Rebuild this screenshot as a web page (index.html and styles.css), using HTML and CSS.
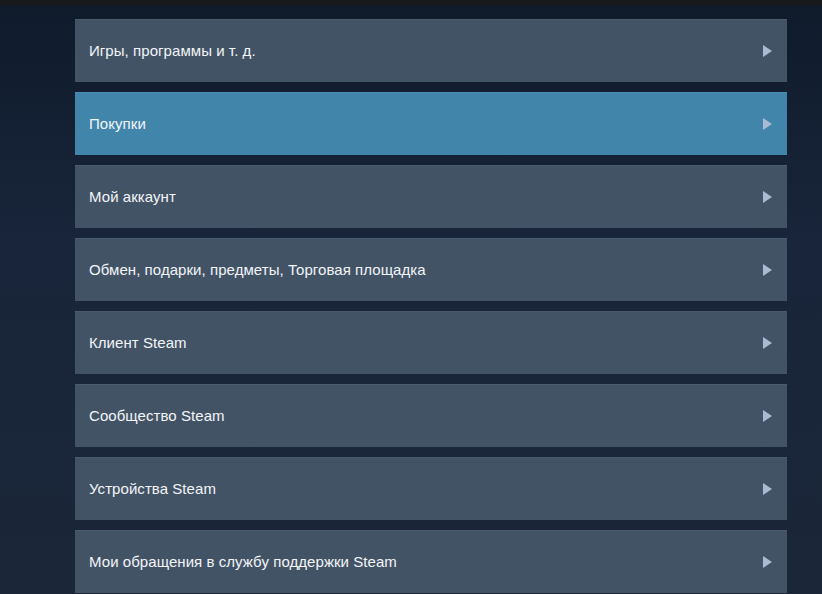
FILE: index.html
```html
<!DOCTYPE html>
<html lang="ru">
<head>
<meta charset="utf-8">
<link rel="stylesheet" href="styles.css">
</head>
<body>
<div class="topbar"></div>
<main class="page">
  <ul class="menu">
    <li class="item"><span class="label">Игры, программы и т. д.</span><span class="arrow"></span></li>
    <li class="item active"><span class="label">Покупки</span><span class="arrow"></span></li>
    <li class="item"><span class="label">Мой аккаунт</span><span class="arrow"></span></li>
    <li class="item"><span class="label">Обмен, подарки, предметы, Торговая площадка</span><span class="arrow"></span></li>
    <li class="item"><span class="label">Клиент Steam</span><span class="arrow"></span></li>
    <li class="item"><span class="label">Сообщество Steam</span><span class="arrow"></span></li>
    <li class="item"><span class="label">Устройства Steam</span><span class="arrow"></span></li>
    <li class="item"><span class="label">Мои обращения в службу поддержки Steam</span><span class="arrow"></span></li>
  </ul>
</main>
</body>
</html>
```
FILE: styles.css
```css
html, body {
  margin: 0;
  padding: 0;
  height: 100%;
  overflow: hidden;
}
body {
  background: linear-gradient(180deg, #0f1b2b 0%, #18253a 40%, #1b2638 100%);
  font-family: Arial, "Liberation Sans", sans-serif;
}
.topbar {
  height: 6px;
  background: #17191c;
}
.page {
  padding: 13px 35px 0 75px;
}
.menu {
  list-style: none;
  margin: 0;
  padding: 0;
  display: flex;
  flex-direction: column;
  gap: 10px;
}
.item {
  height: 63px;
  box-sizing: border-box;
  background: #435366;
  border-top: 1px solid #4b5b6e;
  display: flex;
  align-items: center;
  justify-content: space-between;
  padding: 0 15px 1px 14px;
  color: #f2f5f8;
  font-size: 15px;
  letter-spacing: 0.06px;
}
.item.active {
  background: #4285ab;
  border-top-color: #4a8db3;
}
.arrow {
  width: 0;
  height: 0;
  border-top: 6px solid transparent;
  border-bottom: 6px solid transparent;
  border-left: 9px solid #a8bbd2;
}
```
